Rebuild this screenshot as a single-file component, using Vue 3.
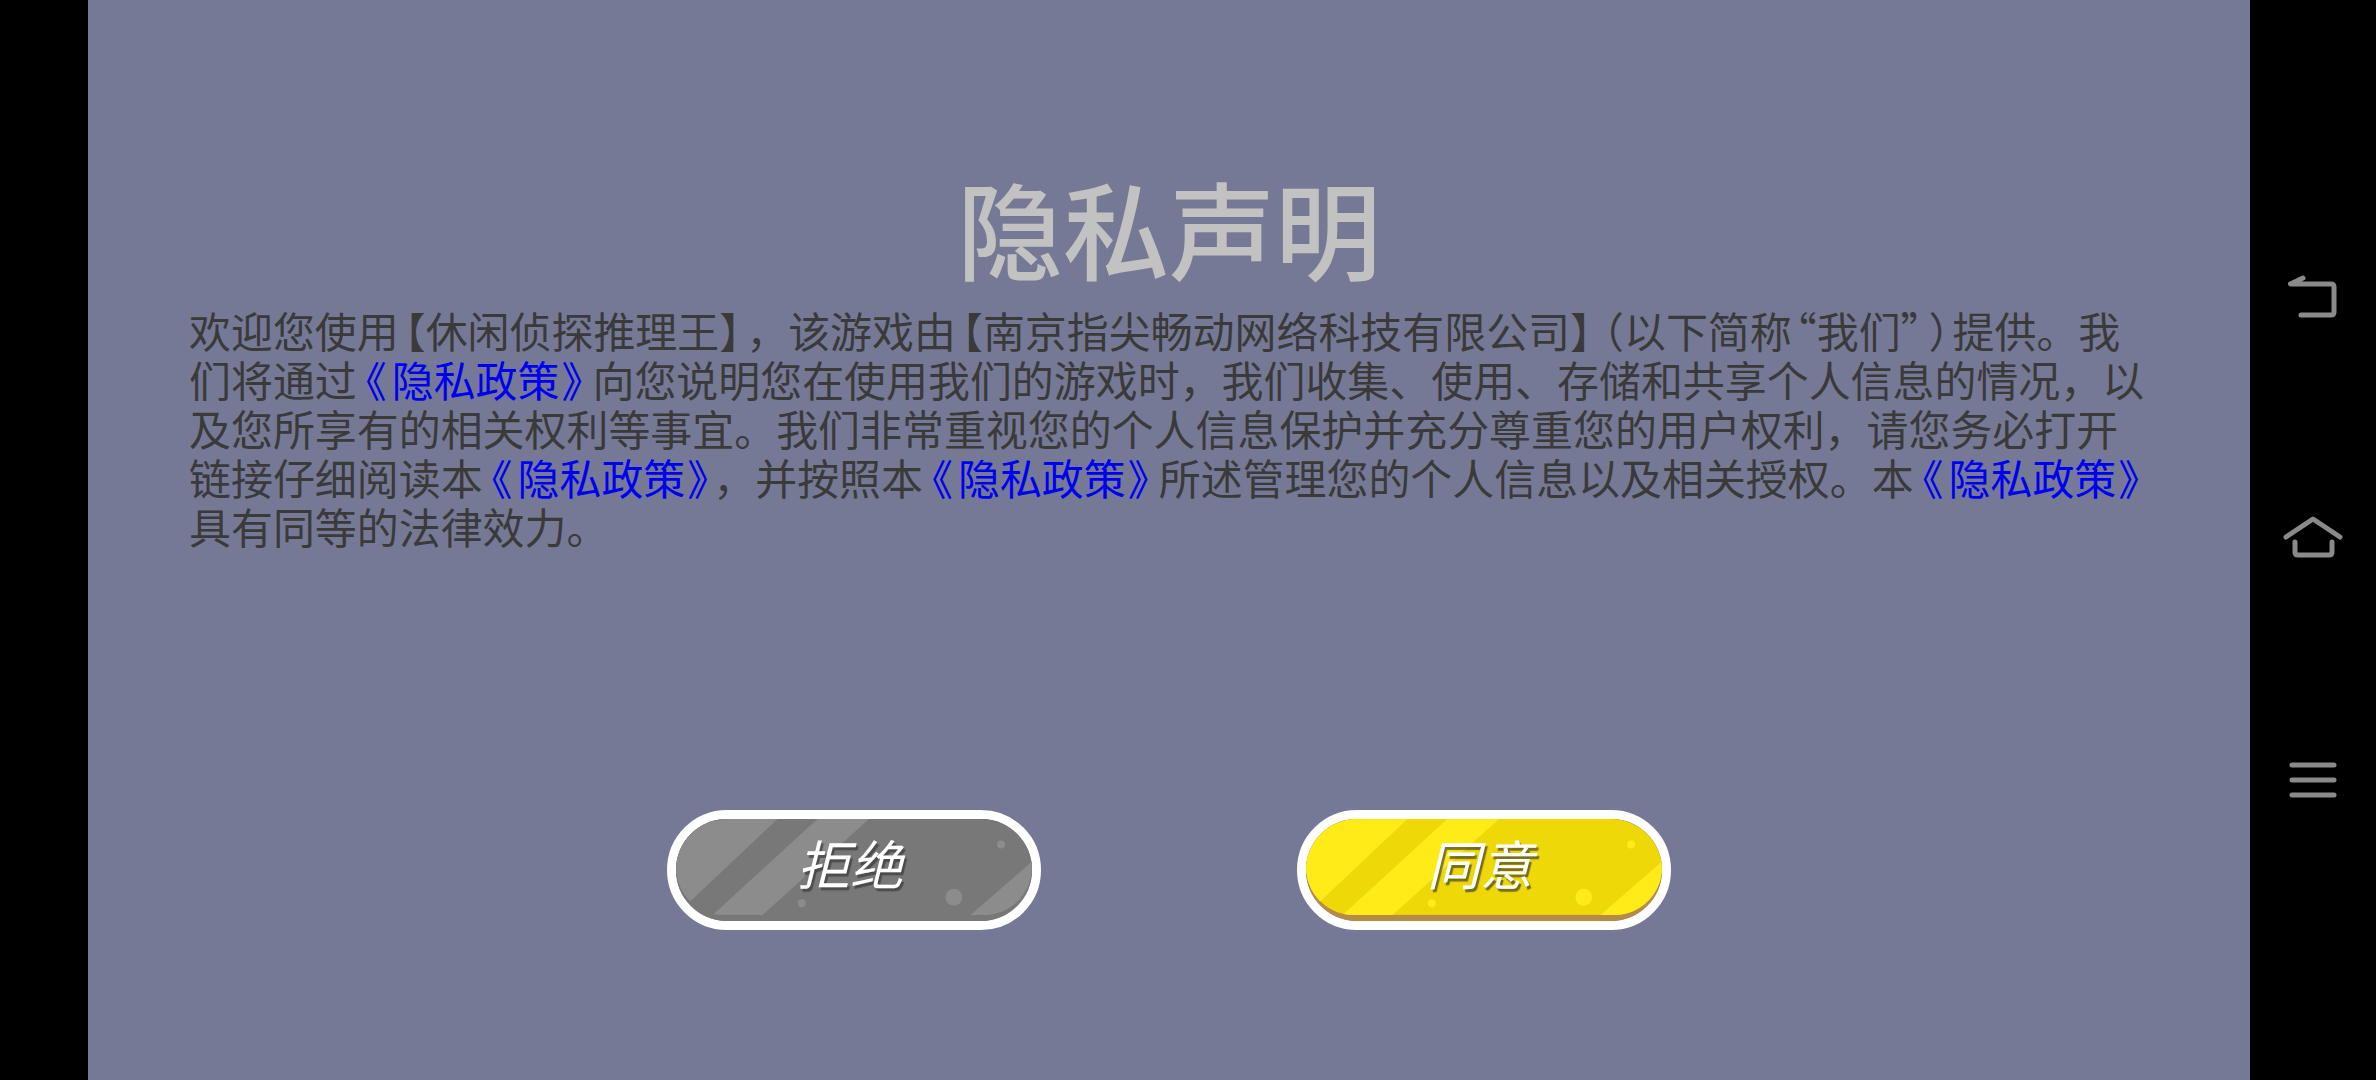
<script setup>
const buttons = [
  { label: '拒绝', tone: 'grey' },
  { label: '同意', tone: 'yellow' },
]
</script>

<template>
  <div class="screen">
    <main class="panel">
      <h1 class="title">隐私声明</h1>
      <p class="notice">
        欢迎您使用<span class="lb">【</span>休闲侦探推理王<span class="rb">】</span>，该游戏由<span class="lb">【</span>南京指尖畅动网络科技有限公司<span class="rb">】</span><span class="lb">（</span>以下简称<span class="lq">“</span>我们<span class="rq">”</span><span class="rp">）</span>提供。我<br>
        们将通过<a class="link"><span class="open">《</span>隐私政策<span class="close">》</span></a>向您说明您在使用我们的游戏时，我们收集、使用、存储和共享个人信息的情况，以<br>
        及您所享有的相关权利等事宜。我们非常重视您的个人信息保护并充分尊重您的用户权利，请您务必打开<br>
        链接仔细阅读本<a class="link"><span class="open">《</span>隐私政策<span class="close tight">》</span></a>，并按照本<a class="link"><span class="open">《</span>隐私政策<span class="close">》</span></a>所述管理您的个人信息以及相关授权。本<a class="link"><span class="open">《</span>隐私政策<span class="close">》</span></a><br>
        具有同等的法律效力。
      </p>
      <div class="actions">
        <button v-for="b in buttons" :key="b.label" class="btn" :class="b.tone">
          <svg class="art" viewBox="170 115 1070 300" preserveAspectRatio="none" aria-hidden="true">
            <defs>
              <clipPath :id="`body-${b.tone}`">
                <rect x="170" y="115" width="1070" height="282" rx="141" ry="141" />
              </clipPath>
            </defs>
            <rect class="edge" x="170" y="115" width="1070" height="300" />
            <g :clip-path="`url(#body-${b.tone})`">
              <rect class="base" x="170" y="115" width="1070" height="282" />
              <polygon class="shine" points="170,115 475,115 210,360 170,397" />
              <polygon class="shine" points="595,115 750,115 430,397 280,397" />
              <polygon class="shine" points="1240,240 1240,397 1055,397" />
              <circle class="shine" cx="1147" cy="190" r="12" />
              <circle class="shine" cx="1005" cy="345" r="25" />
              <circle class="shine" cx="548" cy="363" r="12" />
            </g>
          </svg>
          <span class="label">{{ b.label }}</span>
        </button>
      </div>
    </main>
    <nav class="nav">
      <svg class="icon" viewBox="0 0 64 64">
        <path d="M22 10 L9.5 16 H50 Q53 16 53 19 V44 Q53 47 50 47 H20" />
      </svg>
      <svg class="icon" viewBox="0 0 64 64">
        <path d="M5 29 L32 11 L59 29 M14 34 V44 Q14 47 17 47 H48 Q51 47 51 44 V34" />
      </svg>
      <svg class="icon" viewBox="0 0 64 64">
        <path d="M11 17 H53 M11 32 H53 M11 47 H53" />
      </svg>
    </nav>
  </div>
</template>

<style scoped>
.screen {
  width: 2376px;
  height: 1080px;
  display: flex;
  background: #000;
  padding-left: 88px;
  box-sizing: border-box;
  overflow: hidden;
  font-family: "Noto Sans CJK SC", "Noto Sans", sans-serif;
}
.panel {
  flex: 1;
  background: #767996;
  display: flex;
  flex-direction: column;
  padding: 166px 0 0 101px;
}
.title {
  margin: 0 0 0 -101px;
  text-align: center;
  font-size: 106px;
  line-height: 120px;
  font-weight: 500;
  color: #c2c2c2;
}
.notice {
  margin: 19px 0 0;
  font-size: 41.95px;
  line-height: 49px;
  color: #3a3a3a;
  white-space: nowrap;
}
.lb, .rb, .lq, .rq, .rp, .open, .close {
  font-feature-settings: "halt";
}
.lb { margin-left: 6px; }
.rb { margin-right: 6px; }
.lq { margin-left: 4px; }
.rq { margin-right: 4px; }
.rp { margin: 0 3px; }
.link {
  color: #0000f0;
}
.open { margin: 0 5px 0 9px; }
.close { margin: 0 10px 0 2px; }
.close.tight { margin-right: 5px; }
.actions {
  display: flex;
  justify-content: center;
  gap: 256px;
  margin: 260px 0 0 -101px;
}
.btn {
  position: relative;
  width: 374px;
  height: 120px;
  padding: 0;
  border: 9px solid #fff;
  border-radius: 60px;
  overflow: hidden;
  box-sizing: border-box;
  background: none;
  font: inherit;
  display: flex;
  align-items: center;
  justify-content: center;
}
.art {
  position: absolute;
  inset: 0;
  width: 100%;
  height: 100%;
}
.grey .base { fill: #787878; }
.grey .shine { fill: #8c8c8c; }
.grey .edge { fill: #787878; }
.yellow .base { fill: #eed807; }
.yellow .shine { fill: #ffeb17; }
.yellow .edge { fill: #b48c45; }
.label {
  position: relative;
  font-size: 53px;
  font-style: italic;
  color: #fff;
  line-height: 60px;
  margin: 0 8px 16px 0;
  text-shadow: 2px 3px 1px rgba(50, 50, 50, 0.65);
}
.nav {
  width: 126px;
  height: 1080px;
  padding: 180px 0;
  box-sizing: border-box;
  display: grid;
  grid-template-rows: repeat(3, 240px);
  justify-items: center;
  align-items: center;
}
.icon {
  width: 64px;
  height: 64px;
  fill: none;
  stroke: #8a8a8a;
  stroke-width: 5;
  stroke-linecap: round;
  stroke-linejoin: round;
}
</style>
